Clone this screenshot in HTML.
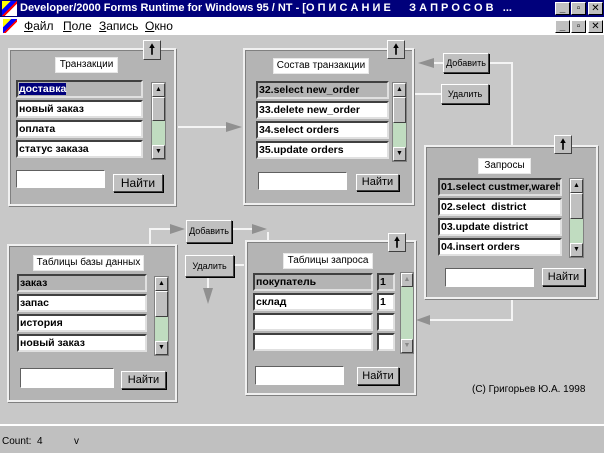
<!DOCTYPE html>
<html><head><meta charset="utf-8"><style>
*{margin:0;padding:0;box-sizing:border-box}
body{width:604px;height:453px;background:#c8c8c8;position:relative;overflow:hidden;font-family:"Liberation Sans","DejaVu Sans",sans-serif;font-size:11px}
.a{position:absolute}
.title{left:0;top:0;width:604px;height:17px;background:#00007b;color:#fff;font-weight:bold;font-size:11px;line-height:17px;padding-left:20px;white-space:nowrap}
.menu{left:0;top:17px;width:604px;height:18px;background:#fff;font-size:12px;line-height:18px}
.wb{width:15px;height:13px;background:#c0c0c0;border:1px solid;border-color:#fff #000 #000 #fff;font-size:10px;line-height:11px;text-align:center;color:#000;font-weight:bold}
.panel{background:#b4b4b4;border:2px solid #f0f0f0;box-shadow:inset 1px 1px 0 #808080,1px 1px 0 #808080}
.lbl{background:#fff;border:1px solid #e8e8e8;font-size:10px;line-height:14px;text-align:center;color:#000;white-space:nowrap;overflow:hidden}
.row{background:#fff;border:2px solid;border-color:#404040 #e0e0e0 #e0e0e0 #404040;font-weight:bold;font-size:10.5px;line-height:14px;padding-left:1px;white-space:nowrap;overflow:hidden}
.row.s{background:#b4b4b4}
.hl{background:#00007b;color:#fff}
.inp{background:#fff;border:1px solid;border-color:#606060 #fff #fff #606060}
.btn{background:#c0c0c0;border:1px solid;border-color:#fff #404040 #404040 #fff;box-shadow:1px 1px 0 #000;text-align:center;font-size:11px;white-space:nowrap}
.sb{background:#c0dcc0;border:1px solid #808080}
.sb .u,.sb .d{position:absolute;left:0;width:13px;height:14px;background:#c0c0c0;border:1px solid;border-color:#fff #404040 #404040 #fff;font-size:7px;line-height:12px;text-align:center}
.sb .t{position:absolute;left:0;width:13px;background:#c0c0c0;border:1px solid;border-color:#fff #404040 #404040 #fff}
.up{background:#c0c0c0;border:1px solid;border-color:#fff #404040 #404040 #fff;font-weight:bold;font-size:14px;line-height:16px;text-align:center}
</style></head><body>
<div class="a title">Developer/2000 Forms Runtime for Windows 95 / NT - [О П И С А Н И Е &nbsp; &nbsp; &nbsp;З А П Р О С О В &nbsp; ...</div>
<div class="a" style="left:2px;top:1px;width:15px;height:15px;background:linear-gradient(135deg,#ff0 0 30%,#00f 30% 50%,#f00 50% 60%,#fff 60%)"></div>
<div class="a wb" style="left:555px;top:2px">_</div><div class="a wb" style="left:571px;top:2px">▫</div><div class="a wb" style="left:588px;top:2px">✕</div>
<div class="a menu"><span style="position:absolute;left:24px"><u>Ф</u>айл</span><span style="position:absolute;left:63px"><u>П</u>оле</span><span style="position:absolute;left:99px"><u>З</u>апись</span><span style="position:absolute;left:145px"><u>О</u>кно</span></div>
<div class="a" style="left:3px;top:19px;width:14px;height:14px;background:linear-gradient(135deg,#ff0 0 30%,#00f 30% 50%,#f00 50% 60%,#fff 60%)"></div>
<div class="a wb" style="left:555px;top:20px">_</div><div class="a wb" style="left:571px;top:20px">▫</div><div class="a wb" style="left:588px;top:20px">✕</div>

<svg class="a" style="left:0;top:0" width="604" height="453">
<g stroke="#f4f4f4" stroke-width="2" fill="none">
<line x1="178" y1="127" x2="228" y2="127"/>
<line x1="430" y1="63" x2="443" y2="63"/>
<polyline points="489,63 512,63 512,145"/>
<line x1="413" y1="94" x2="441" y2="94"/>
<polyline points="512,298 512,320 428,320"/>
<polyline points="150,244 150,229 172,229"/>
<polyline points="231,229 255,229"/><polyline points="268,232 268,240"/>
<polyline points="234,265 244,265"/>
<line x1="208" y1="277" x2="208" y2="290"/>
</g>
<g fill="#909090">
<polygon points="226,122 242,127 226,132"/>
<polygon points="434,58 418,63 434,68"/>
<polygon points="430,315 416,320 430,325"/>
<polygon points="170,224 185,229 170,234"/>
<polygon points="252,224 267,229 252,234"/>
<polygon points="203,288 208,304 213,288"/>
</g>
</svg>

<!-- Panel 1 -->
<div class="a panel" style="left:8px;top:48px;width:168px;height:158px"></div>
<div class="a up" style="left:143px;top:40px;width:18px;height:20px">🠕</div>
<div class="a lbl" style="left:55px;top:57px;width:63px;height:16px">Транзакции</div>
<div class="a row s" style="left:16px;top:80px;width:127px;height:18px"><span class="hl">доставка</span></div>
<div class="a row" style="left:16px;top:100px;width:127px;height:18px">новый заказ</div>
<div class="a row" style="left:16px;top:120px;width:127px;height:18px">оплата</div>
<div class="a row" style="left:16px;top:140px;width:127px;height:18px">статус заказа</div>
<div class="a sb" style="left:151px;top:82px;width:15px;height:78px"><div class="u" style="top:0">▲</div><div class="t" style="top:14px;height:24px"></div><div class="d" style="bottom:0">▼</div></div>
<div class="a inp" style="left:16px;top:170px;width:89px;height:18px"></div>
<div class="a btn" style="left:113px;top:174px;width:50px;height:18px;font-size:12px;line-height:16px">Найти</div>

<!-- Panel 2 -->
<div class="a panel" style="left:243px;top:48px;width:171px;height:157px"></div>
<div class="a up" style="left:387px;top:40px;width:18px;height:19px">🠕</div>
<div class="a lbl" style="left:273px;top:58px;width:96px;height:16px">Состав транзакции</div>
<div class="a row s" style="left:256px;top:81px;width:133px;height:18px">32.select new_order</div>
<div class="a row" style="left:256px;top:101px;width:133px;height:18px">33.delete new_order</div>
<div class="a row" style="left:256px;top:121px;width:133px;height:18px">34.select orders</div>
<div class="a row" style="left:256px;top:141px;width:133px;height:18px">35.update orders</div>
<div class="a sb" style="left:392px;top:82px;width:15px;height:80px"><div class="u" style="top:0">▲</div><div class="t" style="top:14px;height:26px"></div><div class="d" style="bottom:0">▼</div></div>
<div class="a inp" style="left:258px;top:172px;width:89px;height:18px"></div>
<div class="a btn" style="left:356px;top:174px;width:43px;height:17px;line-height:15px">Найти</div>

<div class="a btn" style="left:443px;top:53px;width:46px;height:20px;font-size:9px;line-height:18px">Добавить</div>
<div class="a btn" style="left:441px;top:84px;width:48px;height:20px;font-size:9px;line-height:18px">Удалить</div>

<!-- Panel Запросы -->
<div class="a panel" style="left:424px;top:145px;width:174px;height:154px"></div>
<div class="a up" style="left:554px;top:135px;width:18px;height:19px">🠕</div>
<div class="a lbl" style="left:478px;top:158px;width:53px;height:16px">Запросы</div>
<div class="a row s" style="left:438px;top:178px;width:124px;height:18px">01.select custmer,wareh</div>
<div class="a row" style="left:438px;top:198px;width:124px;height:18px">02.select &nbsp;district</div>
<div class="a row" style="left:438px;top:218px;width:124px;height:18px">03.update district</div>
<div class="a row" style="left:438px;top:238px;width:124px;height:18px">04.insert orders</div>
<div class="a sb" style="left:569px;top:178px;width:15px;height:80px"><div class="u" style="top:0">▲</div><div class="t" style="top:14px;height:26px"></div><div class="d" style="bottom:0">▼</div></div>
<div class="a inp" style="left:445px;top:268px;width:89px;height:19px"></div>
<div class="a btn" style="left:542px;top:268px;width:43px;height:18px;line-height:16px">Найти</div>

<!-- Panel DB tables -->
<div class="a panel" style="left:7px;top:244px;width:170px;height:158px"></div>
<div class="a lbl" style="left:33px;top:255px;width:111px;height:16px">Таблицы базы данных</div>
<div class="a row s" style="left:17px;top:274px;width:130px;height:18px">заказ</div>
<div class="a row" style="left:17px;top:294px;width:130px;height:18px">запас</div>
<div class="a row" style="left:17px;top:314px;width:130px;height:18px">история</div>
<div class="a row" style="left:17px;top:334px;width:130px;height:18px">новый заказ</div>
<div class="a sb" style="left:154px;top:276px;width:15px;height:80px"><div class="u" style="top:0">▲</div><div class="t" style="top:14px;height:26px"></div><div class="d" style="bottom:0">▼</div></div>
<div class="a inp" style="left:20px;top:368px;width:94px;height:20px"></div>
<div class="a btn" style="left:121px;top:371px;width:45px;height:18px;line-height:16px">Найти</div>

<div class="a btn" style="left:186px;top:220px;width:46px;height:23px;font-size:9px;line-height:21px">Добавить</div>
<div class="a btn" style="left:185px;top:255px;width:49px;height:22px;font-size:9px;line-height:20px">Удалить</div>

<!-- Panel query tables -->
<div class="a panel" style="left:245px;top:240px;width:171px;height:155px"></div>
<div class="a up" style="left:388px;top:233px;width:18px;height:19px">🠕</div>
<div class="a lbl" style="left:283px;top:253px;width:90px;height:16px">Таблицы запроса</div>
<div class="a row s" style="left:253px;top:273px;width:120px;height:18px">покупатель</div>
<div class="a row" style="left:253px;top:293px;width:120px;height:18px">склад</div>
<div class="a row" style="left:253px;top:313px;width:120px;height:18px"></div>
<div class="a row" style="left:253px;top:333px;width:120px;height:18px"></div>
<div class="a row s" style="left:377px;top:273px;width:18px;height:18px">1</div>
<div class="a row" style="left:377px;top:293px;width:18px;height:18px">1</div>
<div class="a row" style="left:377px;top:313px;width:18px;height:18px"></div>
<div class="a row" style="left:377px;top:333px;width:18px;height:18px"></div>
<div class="a sb" style="left:400px;top:272px;width:14px;height:82px"><div class="u" style="top:0;width:12px;color:#888">▲</div><div class="d" style="bottom:0;width:12px;color:#888">▼</div></div>
<div class="a inp" style="left:255px;top:366px;width:89px;height:19px"></div>
<div class="a btn" style="left:357px;top:367px;width:42px;height:18px;line-height:16px">Найти</div>

<div class="a" style="left:472px;top:384px;font-size:10px">(C) Григорьев Ю.А. 1998</div>

<div class="a" style="left:0;top:424px;width:604px;height:29px;background:#c0c0c0;border-top:2px solid #fff"></div>
<div class="a" style="left:2px;top:436px;font-size:10px">Count: &nbsp;4</div>
<div class="a" style="left:74px;top:436px;font-size:10px">v</div>
</body></html>
